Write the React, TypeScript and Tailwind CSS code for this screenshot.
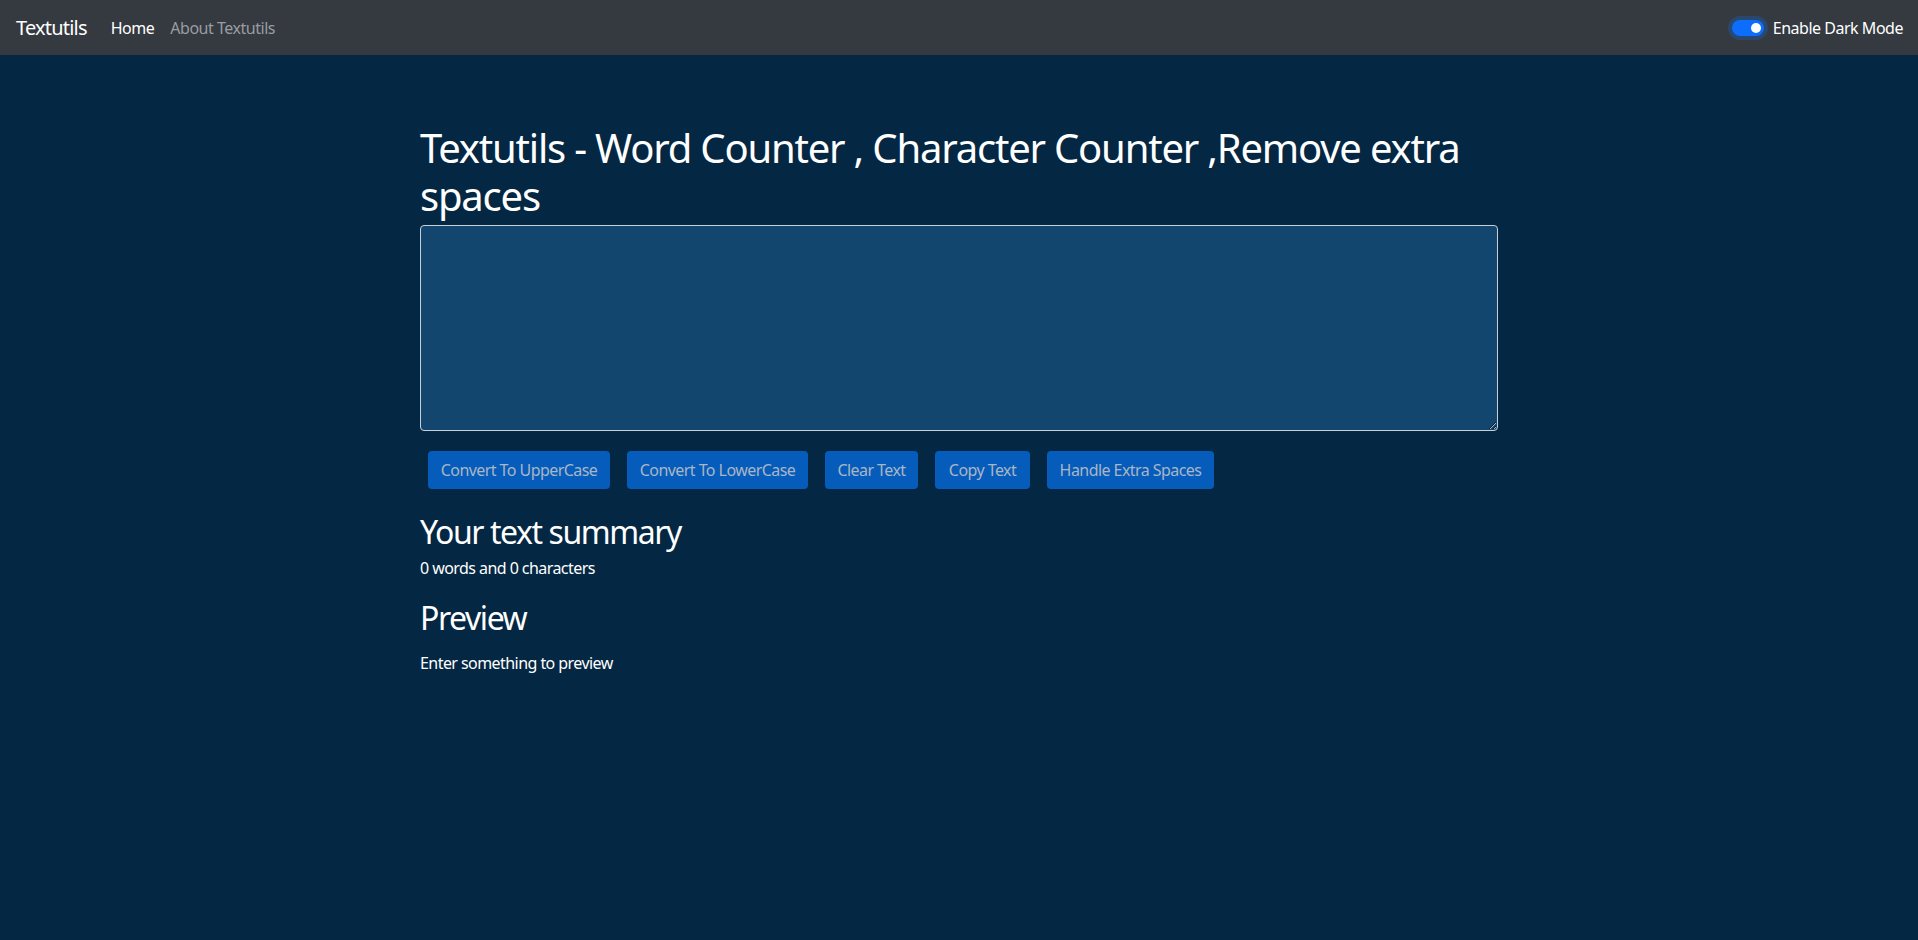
import React, { useState } from 'react';

const font = { fontFamily: '"Noto Sans", "Open Sans", Arial, sans-serif' };

export default function App() {
  const [text, setText] = useState('');
  const [dark, setDark] = useState(true);

  const words = text.split(/\s+/).filter((w) => w.length !== 0).length;

  const buttons = [
    { label: 'Convert To UpperCase', w: 'w-[182px]' },
    { label: 'Convert To LowerCase', w: 'w-[181px]' },
    { label: 'Clear Text', w: 'w-[93px]' },
    { label: 'Copy Text', w: 'w-[95px]' },
    { label: 'Handle Extra Spaces', w: 'w-[167px]' },
  ];

  return (
    <div className="min-h-screen w-full bg-[#042743] text-white" style={font}>
      {/* Navbar */}
      <nav className="h-[55px] bg-[#343a40] flex items-center justify-between pl-4 pr-[15px]">
        <div className="flex items-center">
          <a href="#" className="text-[20px] leading-[30px] text-white tracking-[-0.04em]">
            Textutils
          </a>
          <ul className="flex items-center ml-[24px] gap-[16px] text-[16px] tracking-[-0.03em]">
            <li className="text-white">Home</li>
            <li className="text-[#9a9da0]">About Textutils</li>
          </ul>
        </div>
        <label className="flex items-center gap-[9px] text-[16px] tracking-[-0.03em] cursor-pointer">
          <button
            onClick={() => setDark(!dark)}
            className="relative w-[32px] h-[16px] rounded-full bg-[#0d6efd] ring-4 ring-[#0d6efd]/25"
          >
            <span className="absolute right-[3px] top-[3px] w-[10px] h-[10px] rounded-full bg-white" />
          </button>
          <span>Enable Dark Mode</span>
        </label>
      </nav>

      {/* Main */}
      <div className="w-[1078px] mx-auto">
        <h1 className="mt-[66px] pt-[3px] mb-[5px] text-[40px] leading-[48px] font-normal tracking-[-0.03em]">
          Textutils - Word Counter , Character Counter ,Remove extra spaces
        </h1>
        <textarea
          value={text}
          onChange={(e) => setText(e.target.value)}
          rows={8}
          className="block w-full h-[206px] bg-[#13466e] text-white border border-[#c9cfd6] rounded-[4px] px-3 py-[6px] text-[16px] outline-none"
        />
        <div className="flex gap-[17px] ml-2 mt-[20px]">
          {buttons.map((b) => (
            <button
              key={b.label}
              className={`${b.w} h-[38px] rounded-[4px] bg-[#065cba] text-[#a9b6c6] text-[16px] tracking-[-0.035em] whitespace-nowrap`}
            >
              {b.label}
            </button>
          ))}
        </div>

        <h2 className="mt-[24px] mb-[5px] text-[32px] leading-[38px] font-normal tracking-[-0.045em]">
          Your text summary
        </h2>
        <p className="text-[16px] leading-[24px] tracking-[-0.035em]">
          {words} words and {text.length} characters
        </p>
        <h2 className="mt-[19px] mb-2 text-[32px] leading-[38px] font-normal tracking-[-0.045em]">Preview</h2>
        <p className="mt-[14px] text-[16px] leading-[24px] tracking-[-0.035em]">
          {text.length > 0 ? text : 'Enter something to preview'}
        </p>
      </div>
    </div>
  );
}
